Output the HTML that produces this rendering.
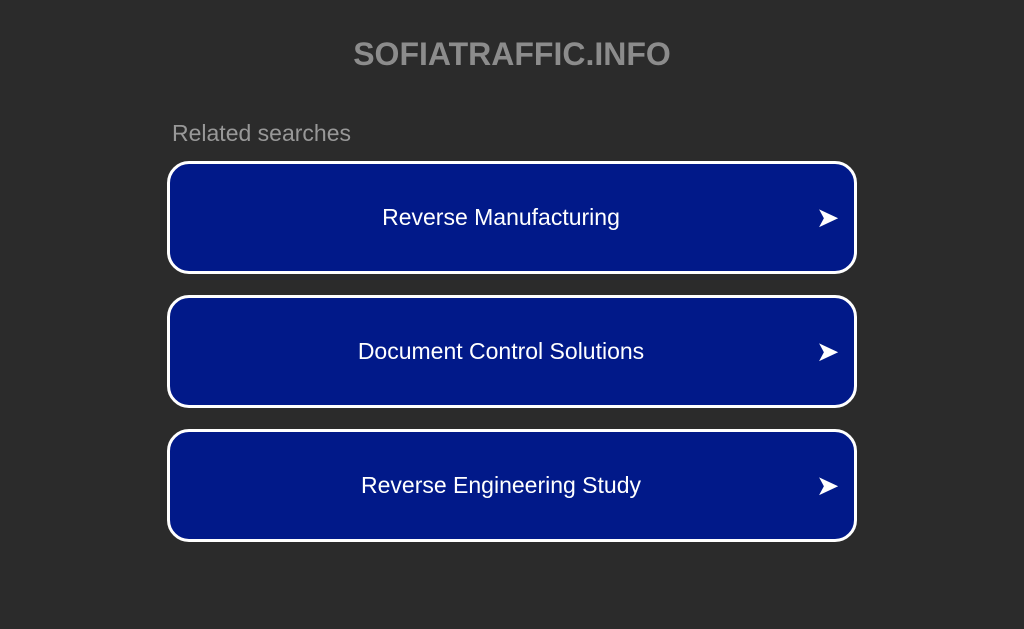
<!DOCTYPE html>
<html><head><style>
body{margin:0;background:#2b2b2b;font-family:"Liberation Sans",Arial,sans-serif;width:1024px;height:629px;overflow:hidden;position:relative}
h1{position:absolute;top:36px;left:0;width:1024px;text-align:center;margin:0;font-size:32px;font-weight:bold;color:#8c8c8c;line-height:36px}
.rs{position:absolute;left:172px;top:119px;font-size:23px;color:#989898;line-height:28px}
.b{position:absolute;left:167px;width:684px;height:107px;border:3px solid #fff;border-radius:22px;background:#011989;color:#fff;font-size:23px;line-height:107px;text-align:center;box-sizing:content-box}
.b span{position:relative;left:-11px}
.b i{position:absolute;left:646px;top:0;font-style:normal;font-size:28px}
</style></head><body>
<h1>SOFIATRAFFIC.INFO</h1>
<div class="rs">Related searches</div>
<div class="b" style="top:161px"><span>Reverse Manufacturing</span><i>➤</i></div>
<div class="b" style="top:295px"><span>Document Control Solutions</span><i>➤</i></div>
<div class="b" style="top:429px"><span>Reverse Engineering Study</span><i>➤</i></div>
</body></html>
